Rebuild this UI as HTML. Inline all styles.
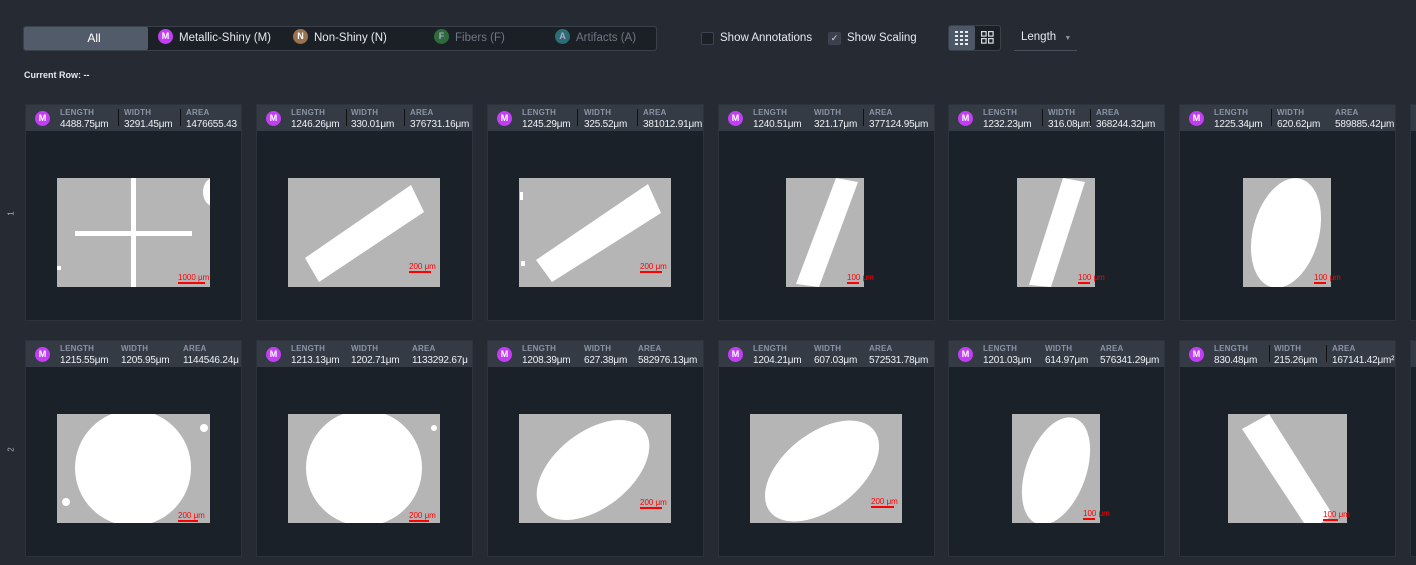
<!DOCTYPE html>
<html><head><meta charset="utf-8"><style>
*{margin:0;padding:0;box-sizing:border-box}
body{width:1416px;height:565px;background:#262b33;font-family:"Liberation Sans",sans-serif;position:relative;overflow:hidden;color:#e6e9ee}
.a{position:absolute}
.seg{left:23px;top:26px;width:634px;height:25px;background:#1b2027;border:1px solid #3b414b;border-radius:3px}
.segall{left:24px;top:27px;width:124px;height:23px;background:#525b69;border-radius:2px;font-size:12px;padding-left:16px;text-align:center;line-height:23px;color:#fff}
.it{top:27px;height:23px;line-height:23px;font-size:11.5px;white-space:nowrap}
.bd{display:inline-block;width:15px;height:15px;border-radius:50%;color:#fff;font-size:9px;font-weight:bold;text-align:center;line-height:15px;vertical-align:middle;margin-right:6px;position:relative;top:-1px}
.cb{width:13px;height:13px;border:1px solid #3d444f;background:#1b2027;border-radius:2px;top:32px}
.card{width:217px;height:217px;background:#1b2129;border:1px solid #2d333c}
.hd{position:absolute;left:0;top:0;width:100%;height:26px;background:#343b45;overflow:hidden}
.lb{position:absolute;top:3px;font-size:8px;font-weight:bold;color:#8994a6;letter-spacing:.2px}
.vl{position:absolute;top:14px;font-size:10px;letter-spacing:-.2px;color:#eef1f5;white-space:nowrap}
.dv{position:absolute;top:4px;width:1px;height:17px;background:#111}
.mb{position:absolute;left:9px;top:6px;width:15px;height:15px;border-radius:50%;background:#c13ef2;color:#fff;font-size:9px;font-weight:bold;text-align:center;line-height:15px}
svg.im{position:absolute;overflow:visible}
</style></head><body>
<div class="a seg"></div>
<div class="a segall">All</div>
<div class="a it" style="left:158px"><span class="bd" style="background:#c13ef2">M</span>Metallic-Shiny (M)</div>
<div class="a it" style="left:293px"><span class="bd" style="background:#9a7350">N</span>Non-Shiny (N)</div>
<div class="a it" style="left:434px;color:#6f7784"><span class="bd" style="background:#2e6b3a;color:#aac">F</span>Fibers (F)</div>
<div class="a it" style="left:555px;color:#6f7784"><span class="bd" style="background:#2c6c73;color:#aac">A</span>Artifacts (A)</div>
<div class="a cb" style="left:701px"></div>
<div class="a it" style="left:720px;top:27px">Show Annotations</div>
<div class="a cb" style="left:828px;background:#3a414c;color:#ddd;font-size:9px;text-align:center;line-height:11px">✓</div>
<div class="a it" style="left:847px;top:27px">Show Scaling</div>
<div class="a" style="left:948px;top:25px;width:53px;height:26px;background:#1b2027;border:1px solid #3b414b;border-radius:3px"></div>
<div class="a" style="left:949px;top:26px;width:26px;height:24px;background:#4e5766;border-radius:2px"></div>
<svg class="a" style="left:955px;top:31px" width="14" height="14"><g fill="#e8ebef"><rect x="0" y="0" width="3" height="2"/><rect x="5" y="0" width="3" height="2"/><rect x="10" y="0" width="3" height="2"/><rect x="0" y="4" width="3" height="2"/><rect x="5" y="4" width="3" height="2"/><rect x="10" y="4" width="3" height="2"/><rect x="0" y="8" width="3" height="2"/><rect x="5" y="8" width="3" height="2"/><rect x="10" y="8" width="3" height="2"/><rect x="0" y="12" width="3" height="2"/><rect x="5" y="12" width="3" height="2"/><rect x="10" y="12" width="3" height="2"/></g></svg>
<svg class="a" style="left:981px;top:31px" width="13" height="13"><g fill="none" stroke="#d8dce2" stroke-width="1.2"><rect x=".6" y=".6" width="4.5" height="4.5"/><rect x="7.6" y=".6" width="4.5" height="4.5"/><rect x=".6" y="7.6" width="4.5" height="4.5"/><rect x="7.6" y="7.6" width="4.5" height="4.5"/></g></svg>
<div class="a it" style="left:1021px;top:26px">Length <span style="font-size:7px;color:#8a93a0;margin-left:5px">▼</span></div>
<div class="a" style="left:1014px;top:50px;width:63px;height:1px;background:#4a515c"></div>
<div class="a" style="left:24px;top:70px;font-size:9px;font-weight:bold;color:#e6e9ee">Current Row: --</div>
<div class="a" style="left:9px;top:209px;font-size:8px;color:#a8b2c2;transform:rotate(-90deg)">1</div>
<div class="a" style="left:9px;top:445px;font-size:8px;color:#a8b2c2;transform:rotate(-90deg)">2</div>

<!-- Row 1 -->
<div class="a card" style="left:25px;top:104px"><div class="hd"><div class="mb">M</div><div class="lb" style="left:34px">LENGTH</div><div class="vl" style="left:34px">4488.75μm</div><div class="dv" style="left:92px"></div><div class="lb" style="left:98px">WIDTH</div><div class="vl" style="left:98px">3291.45μm</div><div class="dv" style="left:154px"></div><div class="lb" style="left:160px">AREA</div><div class="vl" style="left:160px">1476655.43</div></div></div>
<div class="a card" style="left:256px;top:104px"><div class="hd"><div class="mb">M</div><div class="lb" style="left:34px">LENGTH</div><div class="vl" style="left:34px">1246.26μm</div><div class="dv" style="left:89px"></div><div class="lb" style="left:94px">WIDTH</div><div class="vl" style="left:94px">330.01μm</div><div class="dv" style="left:147px"></div><div class="lb" style="left:153px">AREA</div><div class="vl" style="left:153px">376731.16μm</div></div></div>
<div class="a card" style="left:487px;top:104px"><div class="hd"><div class="mb">M</div><div class="lb" style="left:34px">LENGTH</div><div class="vl" style="left:34px">1245.29μm</div><div class="dv" style="left:89px"></div><div class="lb" style="left:96px">WIDTH</div><div class="vl" style="left:96px">325.52μm</div><div class="dv" style="left:149px"></div><div class="lb" style="left:155px">AREA</div><div class="vl" style="left:155px">381012.91μm</div></div></div>
<div class="a card" style="left:718px;top:104px"><div class="hd"><div class="mb">M</div><div class="lb" style="left:34px">LENGTH</div><div class="vl" style="left:34px">1240.51μm</div><div class="lb" style="left:95px">WIDTH</div><div class="vl" style="left:95px">321.17μm</div><div class="dv" style="left:144px"></div><div class="lb" style="left:150px">AREA</div><div class="vl" style="left:150px">377124.95μm</div></div></div>
<div class="a card" style="left:948px;top:104px"><div class="hd"><div class="mb">M</div><div class="lb" style="left:34px">LENGTH</div><div class="vl" style="left:34px">1232.23μm</div><div class="dv" style="left:93px"></div><div class="lb" style="left:99px">WIDTH</div><div class="vl" style="left:99px">316.08μm</div><div class="dv" style="left:141px"></div><div class="lb" style="left:147px">AREA</div><div class="vl" style="left:147px">368244.32μm</div></div></div>
<div class="a card" style="left:1179px;top:104px"><div class="hd"><div class="mb">M</div><div class="lb" style="left:34px">LENGTH</div><div class="vl" style="left:34px">1225.34μm</div><div class="dv" style="left:91px"></div><div class="lb" style="left:97px">WIDTH</div><div class="vl" style="left:97px">620.62μm</div><div class="lb" style="left:155px">AREA</div><div class="vl" style="left:155px">589885.42μm</div></div></div>
<div class="a card" style="left:1410px;top:104px"><div class="hd"></div></div>

<!-- Row 2 -->
<div class="a card" style="left:25px;top:340px"><div class="hd"><div class="mb">M</div><div class="lb" style="left:34px">LENGTH</div><div class="vl" style="left:34px">1215.55μm</div><div class="lb" style="left:95px">WIDTH</div><div class="vl" style="left:95px">1205.95μm</div><div class="lb" style="left:157px">AREA</div><div class="vl" style="left:157px">1144546.24μ</div></div></div>
<div class="a card" style="left:256px;top:340px"><div class="hd"><div class="mb">M</div><div class="lb" style="left:34px">LENGTH</div><div class="vl" style="left:34px">1213.13μm</div><div class="lb" style="left:94px">WIDTH</div><div class="vl" style="left:94px">1202.71μm</div><div class="lb" style="left:155px">AREA</div><div class="vl" style="left:155px">1133292.67μ</div></div></div>
<div class="a card" style="left:487px;top:340px"><div class="hd"><div class="mb">M</div><div class="lb" style="left:34px">LENGTH</div><div class="vl" style="left:34px">1208.39μm</div><div class="lb" style="left:96px">WIDTH</div><div class="vl" style="left:96px">627.38μm</div><div class="lb" style="left:150px">AREA</div><div class="vl" style="left:150px">582976.13μm</div></div></div>
<div class="a card" style="left:718px;top:340px"><div class="hd"><div class="mb">M</div><div class="lb" style="left:34px">LENGTH</div><div class="vl" style="left:34px">1204.21μm</div><div class="lb" style="left:95px">WIDTH</div><div class="vl" style="left:95px">607.03μm</div><div class="lb" style="left:150px">AREA</div><div class="vl" style="left:150px">572531.78μm</div></div></div>
<div class="a card" style="left:948px;top:340px"><div class="hd"><div class="mb">M</div><div class="lb" style="left:34px">LENGTH</div><div class="vl" style="left:34px">1201.03μm</div><div class="lb" style="left:96px">WIDTH</div><div class="vl" style="left:96px">614.97μm</div><div class="lb" style="left:151px">AREA</div><div class="vl" style="left:151px">576341.29μm</div></div></div>
<div class="a card" style="left:1179px;top:340px"><div class="hd"><div class="mb">M</div><div class="lb" style="left:34px">LENGTH</div><div class="vl" style="left:34px">830.48μm</div><div class="dv" style="left:89px"></div><div class="lb" style="left:94px">WIDTH</div><div class="vl" style="left:94px">215.26μm</div><div class="dv" style="left:146px"></div><div class="lb" style="left:152px">AREA</div><div class="vl" style="left:152px">167141.42μm²</div></div></div>
<div class="a card" style="left:1410px;top:340px"><div class="hd"></div></div>

<!-- Images row 1 -->
<svg class="im" style="left:57px;top:178px" width="153" height="109"><svg width="153" height="109"><rect width="153" height="109" fill="#b5b5b5"/><rect x="74" width="5" height="109" fill="#fff"/><rect x="18" y="53" width="117" height="5" fill="#fff"/><ellipse cx="156" cy="14" rx="10" ry="14" fill="#fff"/><rect x="0" y="88" width="4" height="4" fill="#fff"/></svg><text x="121" y="102" font-size="8" fill="#f00" font-family="Liberation Sans">1000 μm</text><rect x="121" y="104" width="27" height="2" fill="#f00"/></svg>
<svg class="im" style="left:288px;top:178px" width="152" height="109"><svg width="152" height="109"><rect width="152" height="109" fill="#b5b5b5"/><polygon points="17,80 31,104 136,34 123,7" fill="#fff"/></svg><text x="121" y="91" font-size="8" fill="#f00" font-family="Liberation Sans">200 μm</text><rect x="121" y="93" width="22" height="2" fill="#f00"/></svg>
<svg class="im" style="left:519px;top:178px" width="152" height="109"><svg width="152" height="109"><rect width="152" height="109" fill="#b5b5b5"/><polygon points="17,82 33,104 142,35 129,6" fill="#fff"/><rect x="1" y="14" width="3" height="8" fill="#fff"/><rect x="2" y="83" width="4" height="5" fill="#fff"/></svg><text x="121" y="91" font-size="8" fill="#f00" font-family="Liberation Sans">200 μm</text><rect x="121" y="93" width="22" height="2" fill="#f00"/></svg>
<svg class="im" style="left:786px;top:178px" width="78" height="109"><svg width="78" height="109"><rect width="78" height="109" fill="#b5b5b5"/><polygon points="50,0 72,4 33,109 10,106" fill="#fff"/></svg><text x="61" y="102" font-size="8" fill="#f00" font-family="Liberation Sans">100 μm</text><rect x="61" y="104" width="12" height="2" fill="#f00"/></svg>
<svg class="im" style="left:1017px;top:178px" width="78" height="109"><svg width="78" height="109"><rect width="78" height="109" fill="#b5b5b5"/><polygon points="46,0 68,4 34,109 12,107" fill="#fff"/></svg><text x="61" y="102" font-size="8" fill="#f00" font-family="Liberation Sans">100 μm</text><rect x="61" y="104" width="12" height="2" fill="#f00"/></svg>
<svg class="im" style="left:1243px;top:178px" width="88" height="109"><svg width="88" height="109"><rect width="88" height="109" fill="#b5b5b5"/><ellipse cx="43" cy="55" rx="33" ry="56" transform="rotate(15 43 55)" fill="#fff"/></svg><text x="71" y="102" font-size="8" fill="#f00" font-family="Liberation Sans">100 μm</text><rect x="71" y="104" width="12" height="2" fill="#f00"/></svg>

<!-- Images row 2 -->
<svg class="im" style="left:57px;top:414px" width="153" height="109"><svg width="153" height="109"><rect width="153" height="109" fill="#b5b5b5"/><circle cx="76" cy="54" r="58" fill="#fff"/><circle cx="147" cy="14" r="4" fill="#fff"/><circle cx="9" cy="88" r="4" fill="#fff"/></svg><text x="121" y="104" font-size="8" fill="#f00" font-family="Liberation Sans">200 μm</text><rect x="121" y="106" width="20" height="2" fill="#f00"/></svg>
<svg class="im" style="left:288px;top:414px" width="152" height="109"><svg width="152" height="109"><rect width="152" height="109" fill="#b5b5b5"/><circle cx="76" cy="54" r="58" fill="#fff"/><circle cx="146" cy="14" r="3" fill="#fff"/></svg><text x="121" y="104" font-size="8" fill="#f00" font-family="Liberation Sans">200 μm</text><rect x="121" y="106" width="20" height="2" fill="#f00"/></svg>
<svg class="im" style="left:519px;top:414px" width="152" height="109"><svg width="152" height="109"><rect width="152" height="109" fill="#b5b5b5"/><ellipse cx="74" cy="56" rx="65" ry="38" transform="rotate(-38 74 56)" fill="#fff"/></svg><text x="121" y="91" font-size="8" fill="#f00" font-family="Liberation Sans">200 μm</text><rect x="121" y="93" width="22" height="2" fill="#f00"/></svg>
<svg class="im" style="left:750px;top:414px" width="152" height="109"><svg width="152" height="109"><rect width="152" height="109" fill="#b5b5b5"/><ellipse cx="72" cy="57" rx="66" ry="38" transform="rotate(-38 72 57)" fill="#fff"/></svg><text x="121" y="90" font-size="8" fill="#f00" font-family="Liberation Sans">200 μm</text><rect x="121" y="92" width="23" height="2" fill="#f00"/></svg>
<svg class="im" style="left:1012px;top:414px" width="88" height="109"><svg width="88" height="109"><rect width="88" height="109" fill="#b5b5b5"/><ellipse cx="44" cy="57" rx="30" ry="56" transform="rotate(20 44 57)" fill="#fff"/></svg><text x="71" y="102" font-size="8" fill="#f00" font-family="Liberation Sans">100 μm</text><rect x="71" y="104" width="12" height="2" fill="#f00"/></svg>
<svg class="im" style="left:1228px;top:414px" width="119" height="109"><svg width="119" height="109"><rect width="119" height="109" fill="#b5b5b5"/><polygon points="14,15 41,0 105,101 93,109 76,109" fill="#fff"/></svg><text x="95" y="103" font-size="8" fill="#f00" font-family="Liberation Sans">100 μm</text><rect x="95" y="105" width="15" height="2" fill="#f00"/></svg>
</body></html>
